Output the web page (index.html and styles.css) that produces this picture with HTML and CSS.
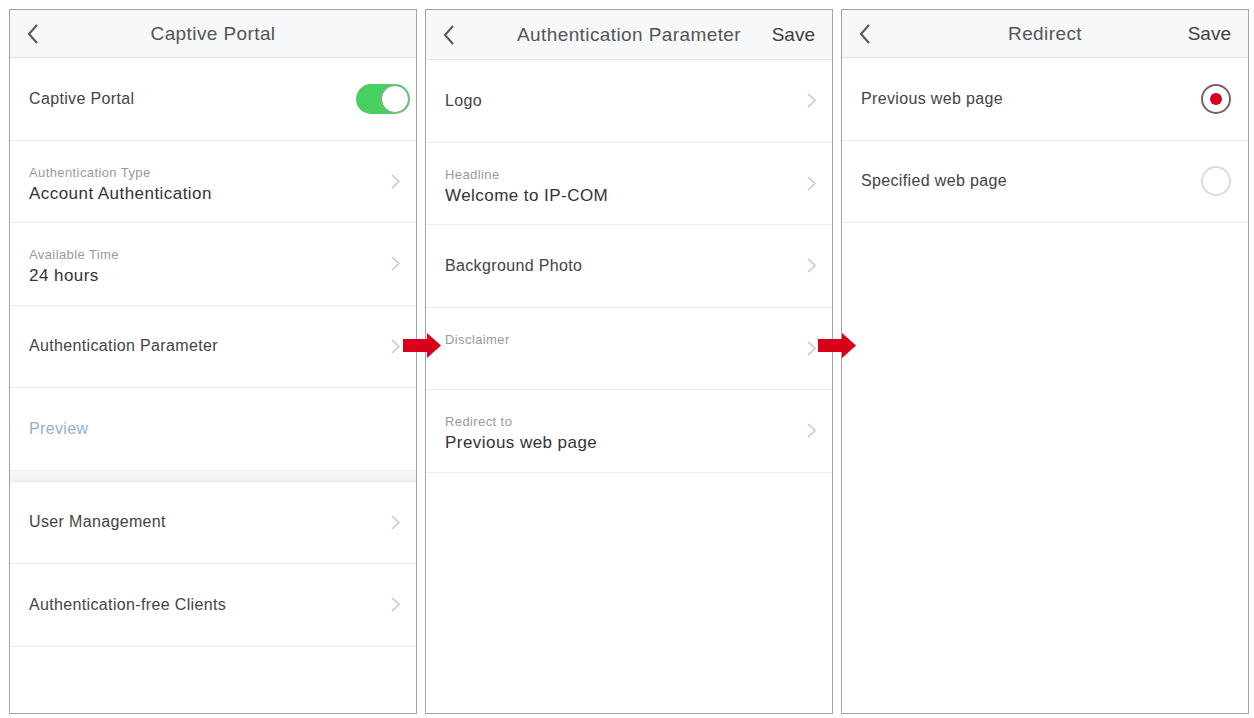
FILE: index.html
```html
<!DOCTYPE html>
<html>
<head>
    <title>Captive Portal</title>
    <link rel="stylesheet" href="styles.css">
</head>
<body>
    <div class="board">
        <!-- tela 1: portal -->
        <div class="phone">
            <div class="bar">
                <svg class="back" width="12" height="20" viewBox="0 0 12 20"><polyline points="10,1 2,10 10,19" /></svg>
                <div class="bar-title">Captive Portal</div>
                <div class="bar-action"></div>
            </div>
            <div class="row">
                <span class="row-text">Captive Portal</span>
                <span class="switch on"><span class="knob"></span></span>
            </div>
            <div class="row">
                <div class="stack">
                    <span class="label">Authentication Type</span>
                    <span class="value">Account Authentication</span>
                </div>
                <svg class="chev" width="9" height="15" viewBox="0 0 9 15"><polyline points="1,1 8,7.5 1,14" /></svg>
            </div>
            <div class="row">
                <div class="stack">
                    <span class="label">Available Time</span>
                    <span class="value">24 hours</span>
                </div>
                <svg class="chev" width="9" height="15" viewBox="0 0 9 15"><polyline points="1,1 8,7.5 1,14" /></svg>
            </div>
            <div class="row">
                <span class="row-text">Authentication Parameter</span>
                <svg class="chev" width="9" height="15" viewBox="0 0 9 15"><polyline points="1,1 8,7.5 1,14" /></svg>
            </div>
            <div class="row">
                <span class="row-text link">Preview</span>
            </div>
            <div class="spacer"></div>
            <div class="row">
                <span class="row-text">User Management</span>
                <svg class="chev" width="9" height="15" viewBox="0 0 9 15"><polyline points="1,1 8,7.5 1,14" /></svg>
            </div>
            <div class="row">
                <span class="row-text">Authentication-free Clients</span>
                <svg class="chev" width="9" height="15" viewBox="0 0 9 15"><polyline points="1,1 8,7.5 1,14" /></svg>
            </div>
        </div>

        <!-- tela 2: parametros -->
        <div class="phone">
            <div class="bar tall">
                <svg class="back" width="12" height="20" viewBox="0 0 12 20"><polyline points="10,1 2,10 10,19" /></svg>
                <div class="bar-title">Authentication Parameter</div>
                <div class="bar-action">Save</div>
            </div>
            <div class="row">
                <span class="row-text">Logo</span>
                <svg class="chev" width="9" height="15" viewBox="0 0 9 15"><polyline points="1,1 8,7.5 1,14" /></svg>
            </div>
            <div class="row">
                <div class="stack">
                    <span class="label">Headline</span>
                    <span class="value">Welcome to IP-COM</span>
                </div>
                <svg class="chev" width="9" height="15" viewBox="0 0 9 15"><polyline points="1,1 8,7.5 1,14" /></svg>
            </div>
            <div class="row">
                <span class="row-text">Background Photo</span>
                <svg class="chev" width="9" height="15" viewBox="0 0 9 15"><polyline points="1,1 8,7.5 1,14" /></svg>
            </div>
            <div class="row">
                <div class="stack">
                    <span class="label">Disclaimer</span>
                    <span class="value">&nbsp;</span>
                </div>
                <svg class="chev" width="9" height="15" viewBox="0 0 9 15"><polyline points="1,1 8,7.5 1,14" /></svg>
            </div>
            <div class="row">
                <div class="stack">
                    <span class="label">Redirect to</span>
                    <span class="value">Previous web page</span>
                </div>
                <svg class="chev" width="9" height="15" viewBox="0 0 9 15"><polyline points="1,1 8,7.5 1,14" /></svg>
            </div>
        </div>

        <!-- tela 3: redirecionamento -->
        <div class="phone">
            <div class="bar">
                <svg class="back" width="12" height="20" viewBox="0 0 12 20"><polyline points="10,1 2,10 10,19" /></svg>
                <div class="bar-title">Redirect</div>
                <div class="bar-action">Save</div>
            </div>
            <div class="row">
                <span class="row-text">Previous web page</span>
                <span class="radio checked"></span>
            </div>
            <div class="row">
                <span class="row-text">Specified web page</span>
                <span class="radio"></span>
            </div>
        </div>

        <svg class="arrow first" width="38" height="25" viewBox="0 0 38 25"><polygon points="0,6 24,6 24,0 38,12.5 24,25 24,19 0,19" /></svg>
        <svg class="arrow second" width="38" height="25" viewBox="0 0 38 25"><polygon points="0,6 24,6 24,0 38,12.5 24,25 24,19 0,19" /></svg>
    </div>
</body>
</html>
```

FILE: styles.css
```css
body {
    margin: 0;
    padding: 0;
    background-color: #fff;
    font-family: "Liberation Sans", Arial, sans-serif;
    color: #333;
}
.board {
    position: relative;
    display: flex;
    gap: 8px;
    padding: 9px 0 0 9px;
}
.phone {
    width: 408px;
    height: 705px;
    box-sizing: border-box;
    border: 1px solid #a3a3a3;
    background-color: #fff;
    overflow: hidden;
}
.bar {
    height: 48px;
    box-sizing: border-box;
    display: grid;
    grid-template-columns: 70px 1fr 70px;
    align-items: center;
    padding: 0 17px;
    background-color: #f7f8fa;
    border-bottom: 1px solid #dfe1e5;
}
.bar.tall {
    height: 50px;
}
.back polyline {
    fill: none;
    stroke: #555;
    stroke-width: 2;
}
.bar-title {
    text-align: center;
    font-size: 19px;
    letter-spacing: 0.4px;
    color: #555;
    white-space: nowrap;
}
.bar-action {
    text-align: right;
    font-size: 19px;
    color: #3f3f3f;
}
.row {
    height: 82.5px;
    box-sizing: border-box;
    display: flex;
    align-items: center;
    justify-content: space-between;
    padding: 0 16px 0 19px;
    border-bottom: 1px solid #ececec;
}
.row-text {
    font-size: 16px;
    letter-spacing: 0.35px;
    color: #444;
}
.row-text.link {
    color: #8fb2d0;
}
.stack {
    display: flex;
    flex-direction: column;
    padding-top: 6px;
}
.label {
    font-size: 13px;
    line-height: 15px;
    letter-spacing: 0.4px;
    color: #9a9a9a;
    margin-bottom: 3px;
}
.value {
    font-size: 17px;
    line-height: 21px;
    letter-spacing: 0.45px;
    color: #333;
}
.chev polyline {
    fill: none;
    stroke: #c6c6c6;
    stroke-width: 1.5;
}
.spacer {
    height: 10px;
    background: linear-gradient(#f7f8f9, #eef0f2);
    border-bottom: 1px solid #e6e6e6;
}
.switch {
    position: relative;
    width: 54px;
    height: 30px;
    margin-right: -10px;
    border-radius: 15px;
    background-color: #49cf60;
}
.switch .knob {
    position: absolute;
    top: 1px;
    right: 1px;
    width: 28px;
    height: 28px;
    box-sizing: border-box;
    border-radius: 50%;
    background-color: #fff;
    border: 1px solid #9a9a9a;
}
.radio {
    position: relative;
    width: 30px;
    height: 30px;
    box-sizing: border-box;
    border-radius: 50%;
    border: 2px solid #dcdcdc;
    margin-right: 1px;
}
.radio.checked {
    border-color: #7d6068;
}
.radio.checked::after {
    content: "";
    position: absolute;
    top: 7px;
    left: 7px;
    width: 12px;
    height: 12px;
    border-radius: 50%;
    background-color: #d5001c;
}
.arrow {
    position: absolute;
    top: 333px;
}
.arrow polygon {
    fill: #d8001a;
}
.arrow.first {
    left: 403px;
}
.arrow.second {
    left: 818px;
}
```
